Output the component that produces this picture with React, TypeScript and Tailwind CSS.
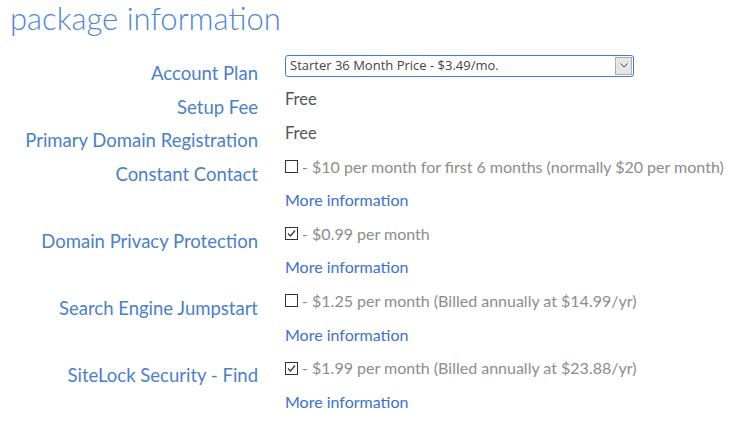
import React from "react";

type Row = {
    label: string;
    kind: "select" | "text" | "check";
    text?: string;
    checked?: boolean;
    more?: boolean;
};

const rows: Row[] = [
    { label: "Account Plan", kind: "select" },
    { label: "Setup Fee", kind: "text", text: "Free" },
    { label: "Primary Domain Registration", kind: "text", text: "Free" },
    { label: "Constant Contact", kind: "check", checked: false, text: "- $10 per month for first 6 months (normally $20 per month)", more: true },
    { label: "Domain Privacy Protection", kind: "check", checked: true, text: "- $0.99 per month", more: true },
    { label: "Search Engine Jumpstart", kind: "check", checked: false, text: "- $1.25 per month (Billed annually at $14.99/yr)", more: true },
    { label: "SiteLock Security - Find", kind: "check", checked: true, text: "- $1.99 per month (Billed annually at $23.88/yr)", more: true },
];

function Checkbox({ checked }: { checked?: boolean }) {
    return (
        <span className="w-[13px] h-[13px] border border-[#333] bg-white flex items-center justify-center shrink-0">
            {checked && (
                <svg width="9" height="9" viewBox="0 0 9 9">
                    <path d="M1 4.5 L3.5 7 L8 1.5" fill="none" stroke="#333" strokeWidth="1.2" />
                </svg>
            )}
        </span>
    );
}

function PlanSelect() {
    return (
        <div className="w-[349px] h-[22px] border border-[#3c7fd6] rounded-[3px] flex items-center bg-white">
            <span className="flex-1 pl-[4px] text-[13px] text-[#444]" style={{ fontFamily: '"Open Sans", sans-serif' }}>
                Starter 36 Month Price - $3.49/mo.
            </span>
            <span className="w-[17px] h-[18px] mr-[1px] border border-[#acacac] bg-[#e5e5e5] flex items-center justify-center">
                <svg width="8" height="5" viewBox="0 0 8 5">
                    <path d="M0.5 0.5 L4 4 L7.5 0.5" fill="none" stroke="#444" strokeWidth="1" />
                </svg>
            </span>
        </div>
    );
}

export default function App() {
    return (
        <div className="w-[734px] h-[423px] bg-white overflow-hidden" style={{ fontFamily: 'Lato, "Open Sans", sans-serif' }}>
            <h1 className="pl-[10px] h-[49px] text-[31px] leading-[37px] font-light text-[#4f86d8]">package information</h1>
            <div className="grid grid-cols-[258px_1fr] gap-x-[27px]">
                {rows.map(row => (
                    <React.Fragment key={row.label}>
                        <div className="text-right text-[18.5px] pt-[12px] leading-[24px] h-[33.6px] text-[#4a7fcb]">{row.label}</div>
                        <div className="flex flex-col">
                            <div className="h-[33.6px] flex items-center">
                                {row.kind === "select" && <PlanSelect />}
                                {row.kind === "text" && <span className="text-[16.5px] text-[#555]">{row.text}</span>}
                                {row.kind === "check" && (
                                    <span className="flex items-center gap-[4px] text-[16px] text-[#8c8c8c]">
                                        <Checkbox checked={row.checked} />
                                        {row.text}
                                    </span>
                                )}
                            </div>
                            {row.more && (
                                <div className="h-[33.6px] flex items-center text-[16px] text-[#3d6fcf]">More information</div>
                            )}
                        </div>
                    </React.Fragment>
                ))}
            </div>
        </div>
    );
}
